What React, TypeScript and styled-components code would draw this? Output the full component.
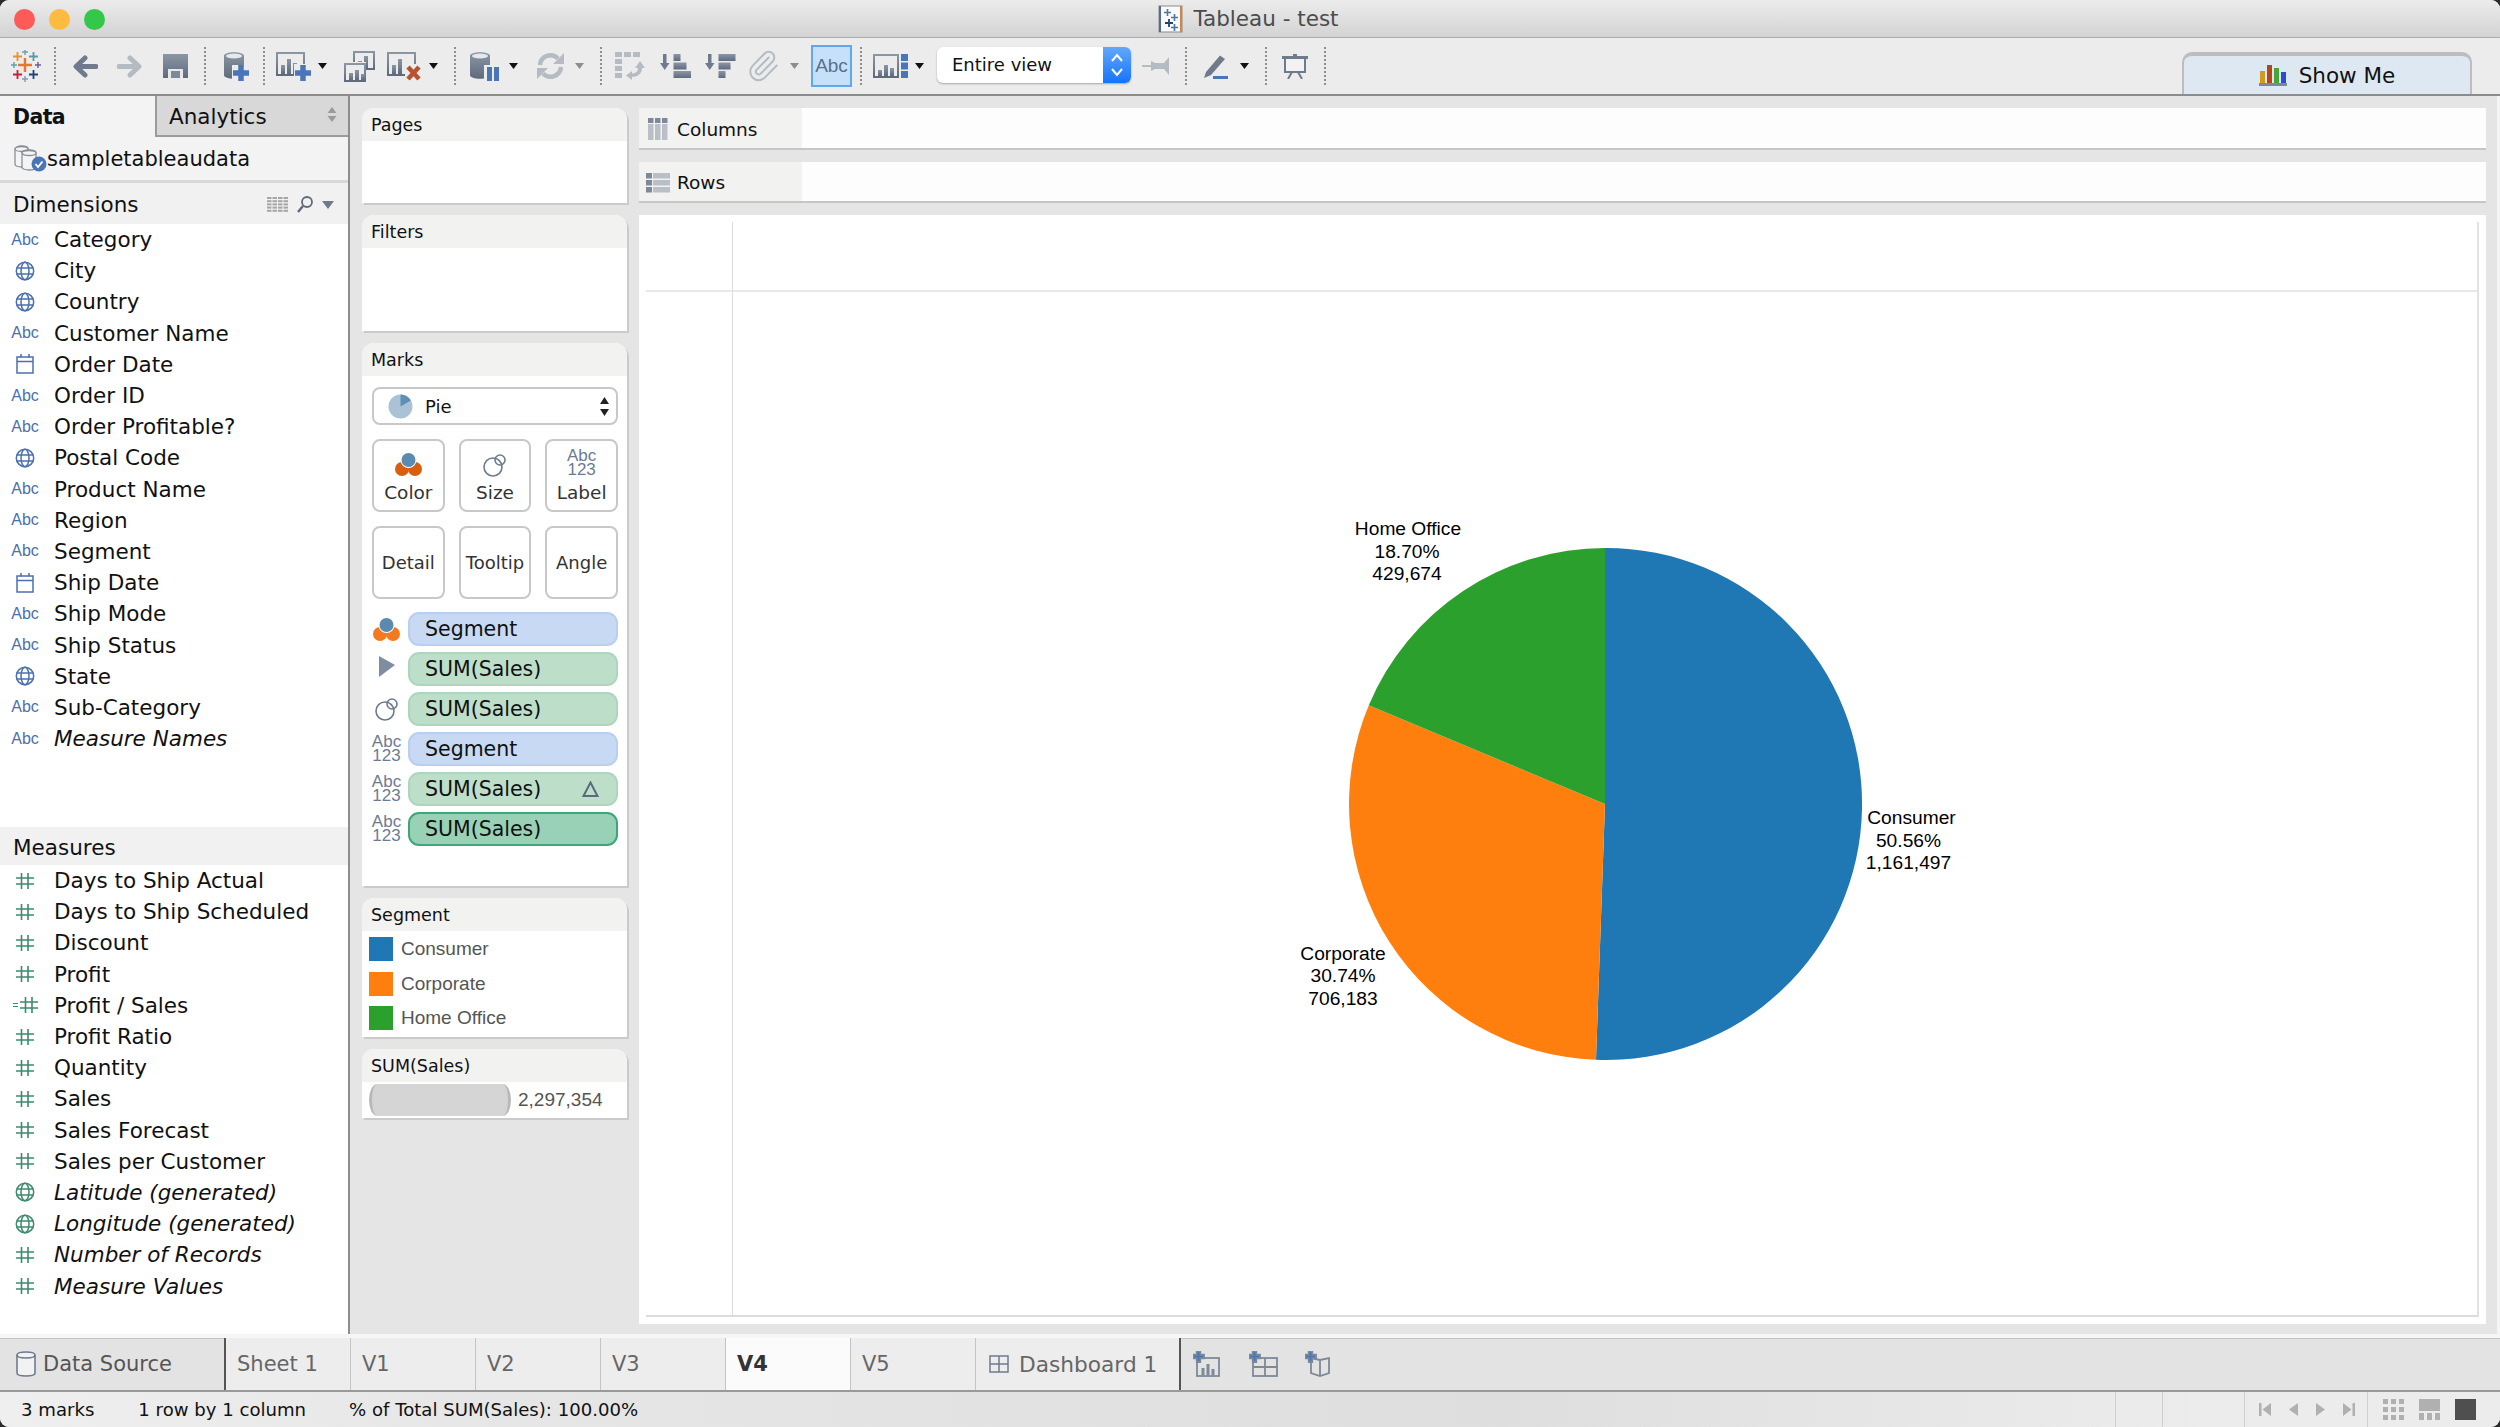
import React from "react";
import styled, { createGlobalStyle } from "styled-components";
import { Paperclip } from "lucide-react";

const UI_FONT = `"DejaVu Sans", Verdana, sans-serif`;
const ARIAL = `"Liberation Sans", Arial, sans-serif`;
const STEEL = "url(#steel)";
const BLUE = "#4a76b8";
const LIGHT = "#b4bbc3";

const GlobalStyle = createGlobalStyle`
  html, body {
    margin: 0;
    padding: 0;
    background: #2b2b2b;
    overflow: hidden;
  }
  * { box-sizing: border-box; }
`;

const dimensions = [
  ["abc", "Category"],
  ["globe", "City"],
  ["globe", "Country"],
  ["abc", "Customer Name"],
  ["date", "Order Date"],
  ["abc", "Order ID"],
  ["abc", "Order Profitable?"],
  ["globe", "Postal Code"],
  ["abc", "Product Name"],
  ["abc", "Region"],
  ["abc", "Segment"],
  ["date", "Ship Date"],
  ["abc", "Ship Mode"],
  ["abc", "Ship Status"],
  ["globe", "State"],
  ["abc", "Sub-Category"],
  ["abc", "Measure Names", true],
] as const;

const measures = [
  ["hash", "Days to Ship Actual"],
  ["hash", "Days to Ship Scheduled"],
  ["hash", "Discount"],
  ["hash", "Profit"],
  ["calc", "Profit / Sales"],
  ["hash", "Profit Ratio"],
  ["hash", "Quantity"],
  ["hash", "Sales"],
  ["hash", "Sales Forecast"],
  ["hash", "Sales per Customer"],
  ["gglobe", "Latitude (generated)", true],
  ["gglobe", "Longitude (generated)", true],
  ["hash", "Number of Records", true],
  ["hash", "Measure Values", true],
] as const;

const sheets = [
  { name: "Sheet 1" },
  { name: "V1" },
  { name: "V2" },
  { name: "V3" },
  { name: "V4", active: true },
  { name: "V5" },
];

function Plus({ x, y, s = 16, t = 5.5, fill = BLUE }: { x: number; y: number; s?: number; t?: number; fill?: string }) {
  const o = (s - t) / 2;
  return <path fill={fill} d={`M${x + o} ${y}h${t}v${o}h${o}v${t}h${-o}v${o}h${-t}v${-o}h${-o}v${-t}h${o}z`} />;
}

function Frame({ x, y, w, h, bars }: { x: number; y: number; w: number; h: number; bars: number[] }) {
  return (
    <>
      <rect x={x + 1} y={y + 1} width={w - 2} height={h - 2} fill="none" stroke={STEEL} strokeWidth="2" />
      {bars.map((b, i) => (
        <rect key={i} x={x + 5 + i * 6} y={y + h - 2 - b} width="4" height={b} fill={STEEL} />
      ))}
    </>
  );
}

function Cylinder() {
  return (
    <>
      <path fill={STEEL} d="M0 5C0 0 20 0 20 5V24C20 29 0 29 0 24Z" />
      <ellipse cx="10" cy="5" rx="8" ry="2.6" fill="#e6e8ea" />
    </>
  );
}

const TableauLogo = () => (
  <svg width="30" height="32" viewBox="0 0 30 32">
    <Plus x={7} y={8} s={14} t={2.4} fill="#e8762c" />
    <Plus x={2} y={2} s={9} t={1.8} fill="#e8942c" />
    <Plus x={18} y={2} s={9} t={1.8} fill="#5b9aa8" />
    <Plus x={2} y={20} s={9} t={1.8} fill="#c72037" />
    <Plus x={18} y={20} s={9} t={1.8} fill="#1f447a" />
    <Plus x={11} y={-1} s={6} t={1.4} fill="#6aa3b0" />
    <Plus x={11} y={26} s={6} t={1.4} fill="#7f9bb5" />
    <Plus x={0} y={12} s={6} t={1.4} fill="#60a0a8" />
    <Plus x={24} y={12} s={6} t={1.4} fill="#6a5c92" />
  </svg>
);

const BackIcon = ({ color = "#6f7b8c", flip = false }: { color?: string; flip?: boolean }) => (
  <svg width="26" height="23" viewBox="0 0 26 23" style={flip ? { transform: "scaleX(-1)" } : undefined}>
    <path d="M24 11.5H5M13 3 4 11.5 13 20" fill="none" stroke={color} strokeWidth="5" strokeLinecap="round" strokeLinejoin="round" />
  </svg>
);

const SaveIcon = () => (
  <svg width="25" height="24" viewBox="0 0 25 24">
    <rect width="25" height="24" fill={STEEL} />
    <rect x="5" y="15" width="15" height="9" fill="#e8e8e8" />
    <rect x="8" y="17" width="9" height="7" fill="#7d8998" />
  </svg>
);

const AddDataIcon = () => (
  <svg width="25" height="30" viewBox="0 0 25 30">
    <Cylinder />
    <rect x="8" y="14" width="17" height="16" fill="#ececec" />
    <Plus x={9} y={14} />
  </svg>
);

const NewSheetIcon = () => (
  <svg width="35" height="29" viewBox="0 0 35 29">
    <Frame x={0} y={0} w={29} h={24} bars={[9, 15, 11]} />
    <rect x="18" y="12" width="17" height="17" fill="#ececec" />
    <Plus x={19} y={13} />
  </svg>
);

const DuplicateIcon = () => (
  <svg width="31" height="31" viewBox="0 0 31 31">
    <Frame x={9} y={0} w={22} h={19} bars={[7, 12]} />
    <rect x="0" y="11" width="22" height="20" fill="#ececec" />
    <Frame x={0} y={12} w={22} h={19} bars={[7, 10, 6]} />
  </svg>
);

const ClearIcon = () => (
  <svg width="34" height="29" viewBox="0 0 34 29">
    <Frame x={0} y={0} w={29} h={24} bars={[9, 15]} />
    <rect x="18" y="12" width="16" height="17" fill="#ececec" />
    <path d="M21 15 32 27M32 15 21 27" stroke="#b8532f" strokeWidth="4.5" />
  </svg>
);

const PauseDataIcon = () => (
  <svg width="29" height="30" viewBox="0 0 29 30">
    <Cylinder />
    <rect x="14" y="14" width="15" height="16" fill="#ececec" />
    <rect x="17" y="16" width="5" height="14" fill={BLUE} />
    <rect x="24" y="16" width="5" height="14" fill={BLUE} />
  </svg>
);

const RefreshIcon = () => (
  <svg width="27" height="28" viewBox="0 0 27 28">
    <path d="M3 13A10.5 10.5 0 0 1 21 6.5M24 15A10.5 10.5 0 0 1 6 21.5" fill="none" stroke={LIGHT} strokeWidth="4.5" />
    <path d="M27 1V12H16ZM0 27V16H11Z" fill={LIGHT} />
  </svg>
);

const SwapIcon = () => (
  <svg width="30" height="28" viewBox="0 0 30 28" fill={LIGHT}>
    {[0, 9, 18].map((x) => (
      <rect key={x} x={x} y="0" width="7" height="5" />
    ))}
    {[7, 14, 21].map((y) => (
      <rect key={y} x="0" y={y} width="7" height="5" />
    ))}
    <path d="M25 9 30 16H27C27 22 22 25 17 25V28L11 23.5 17 19V21.5C20 21.5 23 20 23 16H20Z" />
  </svg>
);

const SortIcon = ({ desc = false }: { desc?: boolean }) => {
  const widths = desc ? [17, 12, 7] : [7, 13, 18];
  return (
    <svg width="31" height="25" viewBox="0 0 31 25">
      <rect x="3" y="0" width="3.5" height="10" fill="#6f7b8c" />
      <path d="M0 9H9.5L4.7 16Z" fill="#6f7b8c" />
      {widths.map((w, i) => (
        <rect key={i} x="13.5" y={i * 8.5} width={w} height="7" fill={STEEL} />
      ))}
    </svg>
  );
};

const PlacementIcon = () => (
  <svg width="35" height="25" viewBox="0 0 35 25">
    <Frame x={0} y={0} w={26} h={24} bars={[6, 11, 8]} />
    <rect x="28" y="0" width="7" height="7" fill={BLUE} />
    <rect x="28" y="8.5" width="7" height="7" fill={BLUE} />
    <rect x="28" y="17" width="7" height="7" fill={BLUE} />
  </svg>
);

const PinIcon = () => (
  <svg width="28" height="18" viewBox="0 0 28 18" fill={LIGHT}>
    <rect x="0" y="8" width="10" height="2" />
    <path d="M9 4 13 6H22L27 0V18L22 12H13L9 14Z" />
  </svg>
);

const PenIcon = () => (
  <svg width="26" height="25" viewBox="0 0 26 25">
    <path d="M3 18 17 1.5 22 5 8 21 1 24Z" fill="#6f7b8c" />
    <rect x="10" y="22" width="15" height="3" fill={BLUE} />
  </svg>
);

const PresentIcon = () => (
  <svg width="26" height="25" viewBox="0 0 26 25">
    <rect x="0" y="2" width="26" height="3" fill="#6f7b8c" />
    <rect x="11" y="0" width="4" height="3" fill="#6f7b8c" />
    <rect x="3" y="4" width="20" height="14" fill="#f2f2f2" stroke="#6f7b8c" strokeWidth="2" />
    <path d="M10 18 6 25M16 18 20 25" stroke="#6f7b8c" strokeWidth="2" />
  </svg>
);

const Caret = ({ light = false }: { light?: boolean }) => (
  <svg width="9" height="6" viewBox="0 0 9 6">
    <path d="M0 0H9L4.5 6Z" fill={light ? "#8d8d8d" : "#111"} />
  </svg>
);

const ShowMeIcon = () => (
  <svg width="28" height="21" viewBox="0 0 28 21">
    <rect x="1" y="6" width="5" height="12" fill="#d39b1d" />
    <rect x="8" y="0" width="5" height="18" fill="#b3471b" />
    <rect x="15" y="3" width="5" height="15" fill="#49a53a" />
    <rect x="22" y="7" width="5" height="11" fill="#2b4cd3" />
    <rect x="0" y="18" width="28" height="3" fill="#7d8998" />
  </svg>
);

const DocIcon = () => (
  <svg width="25" height="28" viewBox="0 0 25 28">
    <rect x="1" y="1" width="23" height="26" fill="#fafafa" stroke="#8c8c8c" />
    <rect x="1" y="1" width="2" height="26" fill="#4f6d96" />
    <rect x="22" y="1" width="2" height="26" fill="#d8843c" />
    <Plus x={6} y={4} s={7} t={1.6} fill="#4a76a8" />
    <Plus x={13} y={9} s={7} t={1.6} fill="#4a76a8" />
    <Plus x={7} y={14} s={8} t={1.8} fill="#24426f" />
    <Plus x={13} y={19} s={7} t={1.6} fill="#4a76a8" />
  </svg>
);

const GlobeIcon = ({ color }: { color: string }) => (
  <svg width="20" height="20" viewBox="0 0 20 20" fill="none" stroke={color} strokeWidth="1.5">
    <circle cx="10" cy="10" r="8.7" />
    <ellipse cx="10" cy="10" rx="4" ry="8.7" />
    <path d="M1.5 7H18.5M1.5 13H18.5" />
  </svg>
);

const DateIcon = () => (
  <svg width="18" height="20" viewBox="0 0 18 20" fill="none" stroke="#4a70b0" strokeWidth="1.5">
    <rect x="1" y="3" width="16" height="16" />
    <path d="M1 7.5H17M5 0V3.5M13 0V3.5" />
  </svg>
);

const HashIcon = ({ calc = false }: { calc?: boolean }) => (
  <svg width={calc ? 25 : 18} height="16" viewBox={calc ? "-7 0 25 16" : "0 0 18 16"} stroke="#3d8a6c" strokeWidth="1.6" fill="none">
    <path d="M5.5 0V16M12 0V16M0 5H18M0 11H18" />
    {calc && <path d="M-7 6.5H-2M-7 9.5H-2" strokeWidth="1.2" />}
  </svg>
);

const FieldIcon = ({ kind }: { kind: string }) => {
  if (kind === "abc") return <AbcMark>Abc</AbcMark>;
  if (kind === "globe") return <GlobeIcon color="#4a70b0" />;
  if (kind === "gglobe") return <GlobeIcon color="#3d8a6c" />;
  if (kind === "date") return <DateIcon />;
  return <HashIcon calc={kind === "calc"} />;
};

const DataSourceIcon = () => (
  <svg width="33" height="27" viewBox="0 0 33 27" fill="#f4f4f4" stroke="#8a8f96" strokeWidth="1.3">
    <path d="M1 4C1 0 14 0 14 4V19C14 23 1 23 1 19Z" />
    <ellipse cx="7.5" cy="4" rx="6.5" ry="2.5" />
    <path d="M8 8C8 4 22 4 22 8V22C22 26 8 26 8 22Z" />
    <ellipse cx="15" cy="8" rx="7" ry="2.5" />
    <circle cx="25" cy="19" r="7.5" fill="#4a76b8" stroke="none" />
    <path d="M21.5 19 24 22 28.5 16.5" stroke="#fff" strokeWidth="1.8" fill="none" />
  </svg>
);

const ListIcon = () => (
  <svg width="21" height="16" viewBox="0 0 21 16" fill="#a6a6a6">
    {[0, 3.2, 6.4, 9.6, 12.8].map((y) =>
      [0, 5.5, 11, 16.5].map((x) => <rect key={`${x}-${y}`} x={x} y={y} width="4.5" height="2" />)
    )}
  </svg>
);

const SearchIcon = () => (
  <svg width="16" height="17" viewBox="0 0 16 17" fill="none" stroke="#5e6a7a" strokeWidth="1.8">
    <circle cx="10" cy="6" r="5" />
    <path d="M6 10 1 16" strokeWidth="2.4" />
  </svg>
);

const VennIcon = ({ dim = false }: { dim?: boolean }) => (
  <svg width="27" height="25" viewBox="0 0 27 25">
    <circle cx="7" cy="17" r="7" fill={dim ? "#d95f0e" : "#f47a20"} />
    <circle cx="20" cy="17" r="7" fill={dim ? "#d95f0e" : "#f47a20"} />
    <circle cx="13.5" cy="8" r="8" fill="#fff" />
    <circle cx="13.5" cy="8" r="7" fill="#5a8ab0" />
  </svg>
);

const SizeIcon = () => (
  <svg width="24" height="24" viewBox="0 0 24 24" fill="none" stroke="#6b7b90" strokeWidth="1.6">
    <circle cx="10" cy="14" r="9" />
    <circle cx="17" cy="7" r="5" />
  </svg>
);

const AngleIcon = () => (
  <svg width="18" height="22" viewBox="0 0 18 22" style={{ marginBottom: 4 }}>
    <path d="M1 0 17 9 1 21Z" fill="#7f8da0" />
  </svg>
);

const PieTypeIcon = () => (
  <svg width="25" height="25" viewBox="-12.5 -12.5 25 25">
    <circle r="12" fill="#a9c2d6" />
    <path d="M0 0V-12A12 12 0 0 1 10.4 -6Z" fill="#5f8fb3" />
  </svg>
);

const ColumnsIcon = () => (
  <svg width="20" height="22" viewBox="0 0 20 22">
    {[0, 7, 14].map((x) => (
      <React.Fragment key={x}>
        <rect x={x} y="0" width="5.5" height="5" fill="#7d8998" />
        <rect x={x} y="6" width="5.5" height="16" fill="#b9bfc7" />
      </React.Fragment>
    ))}
  </svg>
);

const RowsIcon = () => (
  <svg width="24" height="20" viewBox="0 0 24 20">
    {[0, 7, 14].map((y) => (
      <React.Fragment key={y}>
        <rect x="0" y={y} width="6" height="5.5" fill="#7d8998" />
        <rect x="7" y={y} width="17" height="5.5" fill="#b9bfc7" />
      </React.Fragment>
    ))}
  </svg>
);

const TabPlus = ({ kind }: { kind: "sheet" | "dash" | "story" }) => (
  <svg width="29" height="26" viewBox="0 0 29 26" fill="none" stroke="#7d8998" strokeWidth="1.8">
    {kind === "sheet" && (
      <>
        <rect x="4" y="7" width="22" height="18" />
        <path d="M10 24V17M15 24V13M20 24V18" strokeWidth="3" />
      </>
    )}
    {kind === "dash" && (
      <>
        <rect x="4" y="7" width="24" height="18" />
        <path d="M16 7V25M4 16H28" />
      </>
    )}
    {kind === "story" && <path d="M6 7 15 9 24 7V22L15 25 6 22ZM15 9V25" />}
    <Plus x={0} y={0} s={11} t={3.5} fill={BLUE} />
  </svg>
);

function PieChart() {
  const r = 256;
  const point = (pct: number) => {
    const a = (pct / 100) * Math.PI * 2;
    return `${(Math.sin(a) * r).toFixed(1)} ${(-Math.cos(a) * r).toFixed(1)}`;
  };
  return (
    <svg width="1000" height="600" viewBox="-500 -300 1000 600">
      <path d={`M0 0L0 ${-r}A${r} ${r} 0 1 1 ${point(50.56)}Z`} fill="#1f77b4" />
      <path d={`M0 0L${point(50.56)}A${r} ${r} 0 0 1 ${point(81.3)}Z`} fill="#ff7f0e" />
      <path d={`M0 0L${point(81.3)}A${r} ${r} 0 0 1 0 ${-r}Z`} fill="#2ca02c" />
      <g fontFamily={ARIAL} fontSize="19.2" fill="#000" textAnchor="middle">
        <text x="-197" y="-269">Home Office</text>
        <text x="-198" y="-246.5">18.70%</text>
        <text x="-198" y="-224">429,674</text>
        <text x="306.5" y="20">Consumer</text>
        <text x="303.5" y="42.5">50.56%</text>
        <text x="303.5" y="65">1,161,497</text>
        <text x="-262" y="155.5">Corporate</text>
        <text x="-262" y="178">30.74%</text>
        <text x="-262" y="200.5">706,183</text>
      </g>
    </svg>
  );
}

export default function App() {
  return (
    <Windowed>
      <GlobalStyle />
      <svg width="0" height="0" style={{ display: "block" }}>
        <defs>
          <linearGradient id="steel" x1="0" y1="0" x2="0" y2="1">
            <stop offset="0" stopColor="#8b96a5" />
            <stop offset="1" stopColor="#5f6b7d" />
          </linearGradient>
        </defs>
      </svg>

      <TitleBar>
        <Lights>
          <Light $color="#fc5b57" />
          <Light $color="#fdbc40" />
          <Light $color="#34c84a" />
        </Lights>
        <DocIcon />
        <TitleText>Tableau - test</TitleText>
      </TitleBar>

      <Toolbar>
        <Tool $gap={11}><TableauLogo /></Tool>
        <Sep $gap={13} />
        <Tool $gap={16}><BackIcon /></Tool>
        <Tool $gap={19}><BackIcon flip color={LIGHT} /></Tool>
        <Tool $gap={20}><SaveIcon /></Tool>
        <Sep $gap={16} />
        <Tool $gap={18}><AddDataIcon /></Tool>
        <Sep $gap={14} />
        <Tool $gap={11}><NewSheetIcon /></Tool>
        <Tool $gap={7}><Caret /></Tool>
        <Tool $gap={17}><DuplicateIcon /></Tool>
        <Tool $gap={12}><ClearIcon /></Tool>
        <Tool $gap={8}><Caret /></Tool>
        <Sep $gap={16} />
        <Tool $gap={14}><PauseDataIcon /></Tool>
        <Tool $gap={10}><Caret /></Tool>
        <Tool $gap={19}><RefreshIcon /></Tool>
        <Tool $gap={11}><Caret light /></Tool>
        <Sep $gap={16} />
        <Tool $gap={13}><SwapIcon /></Tool>
        <Tool $gap={15}><SortIcon /></Tool>
        <Tool $gap={14}><SortIcon desc /></Tool>
        <Tool $gap={10}><Paperclip size={34} color={LIGHT} strokeWidth={1.4} /></Tool>
        <Tool $gap={10}><Caret light /></Tool>
        <AbcToggle>Abc</AbcToggle>
        <Sep $gap={8} />
        <Tool $gap={11}><PlacementIcon /></Tool>
        <Tool $gap={7}><Caret /></Tool>
        <FitSelect>
          <FitLabel>Entire view</FitLabel>
          <FitStepper>
            <svg width="14" height="26" viewBox="0 0 14 26" fill="none" stroke="#fff" strokeWidth="2">
              <path d="M2 9 7 3 12 9M2 17 7 23 12 17" />
            </svg>
          </FitStepper>
        </FitSelect>
        <Tool $gap={11}><PinIcon /></Tool>
        <Sep $gap={15} />
        <Tool $gap={16}><PenIcon /></Tool>
        <Tool $gap={11}><Caret /></Tool>
        <Sep $gap={16} />
        <Tool $gap={15}><PresentIcon /></Tool>
        <Sep $gap={16} />
        <ShowMe>
          <ShowMeIcon />
          Show Me
        </ShowMe>
      </Toolbar>

      <Body>
        <Sidebar>
          <SideTabs>
            <DataTab>Data</DataTab>
            <AnalyticsTab>
              Analytics
              <svg width="10" height="15" viewBox="0 0 10 15" fill="#9a9a9a">
                <path d="M5 0 9.5 6H.5ZM5 15 9.5 9H.5Z" />
              </svg>
            </AnalyticsTab>
          </SideTabs>
          <SourceRow>
            <DataSourceIcon />
            <span>sampletableaudata</span>
          </SourceRow>
          <SideHeader>
            Dimensions
            <HeaderTools>
              <ListIcon />
              <SearchIcon />
              <svg width="12" height="8" viewBox="0 0 12 8"><path d="M0 0H12L6 8Z" fill="#6f7b8c" /></svg>
            </HeaderTools>
          </SideHeader>
          <FieldList $h={603}>
            {dimensions.map(([kind, name, italic]) => (
              <FieldRow key={name}>
                <FieldSlot><FieldIcon kind={kind} /></FieldSlot>
                <FieldName $italic={!!italic}>{name}</FieldName>
              </FieldRow>
            ))}
          </FieldList>
          <SideHeader $thin>Measures</SideHeader>
          <FieldList>
            {measures.map(([kind, name, italic]) => (
              <FieldRow key={name}>
                <FieldSlot><FieldIcon kind={kind} /></FieldSlot>
                <FieldName $italic={!!italic}>{name}</FieldName>
              </FieldRow>
            ))}
          </FieldList>
        </Sidebar>

        <CardColumn>
          <Card $h={95}><CardHeader>Pages</CardHeader></Card>
          <Card $h={116}><CardHeader>Filters</CardHeader></Card>
          <Card $h={543}>
            <CardHeader>Marks</CardHeader>
            <MarksBody>
              <MarkSelect>
                <PieTypeIcon />
                <MarkSelectLabel>Pie</MarkSelectLabel>
                <svg width="9" height="19" viewBox="0 0 9 19" fill="#222">
                  <path d="M4.5 0 9 7H0ZM4.5 19 9 12H0Z" />
                </svg>
              </MarkSelect>
              <MarkGrid>
                <MarkButton><VennIcon dim /><span>Color</span></MarkButton>
                <MarkButton><SizeIcon /><span>Size</span></MarkButton>
                <MarkButton><AbcStack $size={17}>Abc<br />123</AbcStack><span>Label</span></MarkButton>
                <MarkButton $plain><span>Detail</span></MarkButton>
                <MarkButton $plain><span>Tooltip</span></MarkButton>
                <MarkButton $plain><span>Angle</span></MarkButton>
              </MarkGrid>
              <PillList>
                <PillRow><PillIcon><VennIcon /></PillIcon><Pill $kind="dim">Segment</Pill></PillRow>
                <PillRow><PillIcon><AngleIcon /></PillIcon><Pill $kind="mea">SUM(Sales)</Pill></PillRow>
                <PillRow><PillIcon><SizeIcon /></PillIcon><Pill $kind="mea">SUM(Sales)</Pill></PillRow>
                <PillRow><PillIcon><AbcStack $size={17}>Abc<br />123</AbcStack></PillIcon><Pill $kind="dim">Segment</Pill></PillRow>
                <PillRow>
                  <PillIcon><AbcStack $size={17}>Abc<br />123</AbcStack></PillIcon>
                  <Pill $kind="mea">
                    SUM(Sales)
                    <svg width="17" height="16" viewBox="0 0 17 16">
                      <path d="M8.5 1.5 15.5 15H1.5Z" fill="none" stroke="#5b6a7d" strokeWidth="2" />
                    </svg>
                  </Pill>
                </PillRow>
                <PillRow><PillIcon><AbcStack $size={17}>Abc<br />123</AbcStack></PillIcon><Pill $kind="sel">SUM(Sales)</Pill></PillRow>
              </PillList>
            </MarksBody>
          </Card>
          <Card $h={139}>
            <CardHeader>Segment</CardHeader>
            <Legend>
              <LegendRow><Swatch $color="#1f77b4" />Consumer</LegendRow>
              <LegendRow><Swatch $color="#ff7f0e" />Corporate</LegendRow>
              <LegendRow><Swatch $color="#2ca02c" />Home Office</LegendRow>
            </Legend>
          </Card>
          <Card $h={69}>
            <CardHeader>SUM(Sales)</CardHeader>
            <SizeLegend>
              <SizeBar />
              2,297,354
            </SizeLegend>
          </Card>
        </CardColumn>

        <ViewColumn>
          <Shelf $h={42}>
            <ShelfLabel><ShelfIcon><ColumnsIcon /></ShelfIcon>Columns</ShelfLabel>
          </Shelf>
          <Shelf $h={41}>
            <ShelfLabel><ShelfIcon><RowsIcon /></ShelfIcon>Rows</ShelfLabel>
          </Shelf>
          <Canvas>
            <CanvasGrid>
              <CornerCell />
              <TopCell />
              <SideCell />
              <PaneCell><PieChart /></PaneCell>
            </CanvasGrid>
          </Canvas>
        </ViewColumn>
      </Body>

      <TabBar>
        <SourceTab>
          <svg width="20" height="26" viewBox="0 0 20 26" fill="#f2f2f2" stroke="#6f7b8c" strokeWidth="1.6">
            <path d="M1 4C1 0 19 0 19 4V22C19 26 1 26 1 22Z" />
            <path d="M1 4C1 8 19 8 19 4" fill="none" />
          </svg>
          Data Source
        </SourceTab>
        {sheets.map((s) => (
          <SheetTab key={s.name} $active={!!s.active}>{s.name}</SheetTab>
        ))}
        <DashTab>
          <svg width="20" height="18" viewBox="0 0 20 18" fill="none" stroke="#6f7b8c" strokeWidth="1.5">
            <rect x="1" y="1" width="18" height="16" />
            <path d="M10 1V17M1 9H19" />
          </svg>
          Dashboard 1
        </DashTab>
        <NewTabs>
          <TabPlus kind="sheet" />
          <TabPlus kind="dash" />
          <TabPlus kind="story" />
        </NewTabs>
      </TabBar>

      <StatusBar>
        <StatusText $gap={21}>3 marks</StatusText>
        <StatusText $gap={44}>1 row by 1 column</StatusText>
        <StatusText $gap={43}>% of Total SUM(Sales): 100.00%</StatusText>
        <StatusCell $w={47} $auto />
        <StatusCell $w={82} />
        <StatusCell $w={123}>
          <NavRow>
            <svg width="12" height="13" viewBox="0 0 12 13"><path d="M0 0H2.5V13H0ZM12 0V13L3.5 6.5Z" /></svg>
            <svg width="9" height="13" viewBox="0 0 9 13"><path d="M9 0V13L0 6.5Z" /></svg>
            <svg width="9" height="13" viewBox="0 0 9 13"><path d="M0 0V13L9 6.5Z" /></svg>
            <svg width="12" height="13" viewBox="0 0 12 13"><path d="M12 0H9.5V13H12ZM0 0V13L8.5 6.5Z" /></svg>
          </NavRow>
        </StatusCell>
        <StatusCell $w={133}>
          <ViewRow>
            <svg width="21" height="21" viewBox="0 0 21 21" fill="#b0b0b0">
              {[0, 8, 16].map((y) =>
                [0, 8, 16].map((x) => <rect key={`${x}-${y}`} x={x} y={y} width="5" height="5" />)
              )}
            </svg>
            <svg width="21" height="21" viewBox="0 0 21 21" fill="#b0b0b0">
              <rect width="21" height="12" />
              {[0, 8, 16].map((x) => <rect key={x} x={x} y="14" width="5" height="7" />)}
            </svg>
            <svg width="21" height="21" viewBox="0 0 21 21"><rect width="21" height="21" fill="#4f4f4f" /></svg>
          </ViewRow>
        </StatusCell>
      </StatusBar>
    </Windowed>
  );
}

const Windowed = styled.div`
  width: 2500px;
  height: 1427px;
  display: flex;
  flex-direction: column;
  overflow: hidden;
  border-radius: 9px;
  background: #e5e5e5;
  font-family: ${UI_FONT};
  color: #111;
`;

const TitleBar = styled.div`
  position: relative;
  flex: 0 0 38px;
  display: flex;
  align-items: center;
  justify-content: center;
  gap: 10px;
  padding-right: 3px;
  background: linear-gradient(#ececec, #d3d3d3);
  border-bottom: 1px solid #adadad;
`;

const Lights = styled.div`
  position: absolute;
  left: 14px;
  top: 9px;
  display: flex;
  gap: 14px;
`;

const Light = styled.span<{ $color: string }>`
  width: 21px;
  height: 21px;
  border-radius: 50%;
  background: ${(p) => p.$color};
`;

const TitleText = styled.span`
  font-size: 21.5px;
  color: #4c4c4c;
`;

const Toolbar = styled.div`
  flex: 0 0 58px;
  display: flex;
  align-items: center;
  background: #ececec;
  border-bottom: 2px solid #8c8c8c;
`;

const Tool = styled.span<{ $gap: number }>`
  display: flex;
  align-items: center;
  justify-content: center;
  margin-left: ${(p) => p.$gap}px;
`;

const Sep = styled.span<{ $gap: number }>`
  height: 38px;
  margin-left: ${(p) => p.$gap}px;
  border-left: 2px dotted #8f8f8f;
`;

const AbcToggle = styled.span`
  width: 41px;
  height: 42px;
  margin-left: 12px;
  display: flex;
  align-items: center;
  justify-content: center;
  background: #c7e0f9;
  border: 2px solid #5fa8f0;
  font: 19px ${ARIAL};
  color: #59708e;
`;

const FitSelect = styled.div`
  width: 194px;
  height: 36px;
  margin: 0 0 3px 13px;
  display: flex;
  background: #fff;
  border-radius: 6px;
  box-shadow: 0 1px 2px #0000004d;
  overflow: hidden;
`;

const FitLabel = styled.span`
  flex: 1;
  padding-left: 15px;
  font-size: 18px;
  line-height: 35px;
`;

const FitStepper = styled.span`
  width: 28px;
  display: flex;
  align-items: center;
  justify-content: center;
  background: linear-gradient(#62a8fb, #1474fc);
`;

const ShowMe = styled.div`
  width: 290px;
  height: 42px;
  margin-left: auto;
  margin-right: 28px;
  align-self: flex-end;
  display: flex;
  align-items: center;
  justify-content: center;
  gap: 12px;
  font-size: 21.5px;
  background: #dde8f2;
  border: 2px solid #bdbdbd;
  border-bottom: none;
  border-top-width: 4px;
  border-radius: 10px 10px 0 0;
`;

const Body = styled.div`
  flex: 0 0 1238px;
  display: flex;
  background: #e5e5e5;
  border-right: 3px solid #f4f4f4;
`;

const Sidebar = styled.div`
  width: 350px;
  display: flex;
  flex-direction: column;
  background: #fff;
  border-right: 2px solid #8e8e8e;
`;

const SideTabs = styled.div`
  height: 41px;
  display: flex;
`;

const DataTab = styled.div`
  width: 155px;
  padding: 9px 0 0 13px;
  font-size: 20.5px;
  font-weight: 700;
  letter-spacing: -0.6px;
  background: #f3f3f3;
`;

const AnalyticsTab = styled.div`
  flex: 1;
  display: flex;
  justify-content: space-between;
  padding: 8px 11px 0 12px;
  font-size: 21.5px;
  background: #d8d8d8;
  border-left: 2px solid #9b9b9b;
  border-bottom: 2px solid #9b9b9b;

  svg {
    margin-top: 3px;
  }
`;

const SourceRow = styled.div`
  height: 46px;
  display: flex;
  align-items: center;
  padding-left: 14px;
  font-size: 21px;
  background: #f3f3f3;
  border-bottom: 3px solid #d8d8d8;
`;

const SideHeader = styled.div<{ $thin?: boolean }>`
  height: ${(p) => (p.$thin ? 38 : 41)}px;
  display: flex;
  align-items: center;
  justify-content: space-between;
  padding: 2px 14px 0 13px;
  font-size: 21.5px;
  background: #f1f1f1;
`;

const HeaderTools = styled.span`
  display: flex;
  align-items: center;
  gap: 9px;
  margin-left: auto;
`;

const FieldList = styled.div<{ $h?: number }>`
  height: ${(p) => (p.$h ? `${p.$h}px` : "auto")};
  background: #fff;
`;

const FieldRow = styled.div`
  height: 31.2px;
  display: flex;
  align-items: center;
`;

const FieldSlot = styled.span`
  width: 49px;
  margin-right: 5px;
  display: flex;
  justify-content: center;
  padding-left: 1px;
`;

const FieldName = styled.span<{ $italic: boolean }>`
  font-size: 21.5px;
  font-style: ${(p) => (p.$italic ? "italic" : "normal")};
`;

const AbcMark = styled.span`
  font: 16px ${ARIAL};
  color: #4a70b0;
`;

const AbcStack = styled.span<{ $size: number }>`
  font: ${(p) => p.$size}px/${(p) => p.$size - 3}px ${ARIAL};
  text-align: center;
  color: #6d7b91;
`;

const CardColumn = styled.div`
  width: 265px;
  margin: 12px 12px 0;
  display: flex;
  flex-direction: column;
  gap: 12px;
`;

const Card = styled.div<{ $h: number }>`
  height: ${(p) => p.$h}px;
  background: #fff;
  border-radius: 12px 12px 0 0;
  box-shadow: 2px 2px 0 #cbcbcb;
`;

const CardHeader = styled.div`
  height: 33px;
  padding-left: 9px;
  font-size: 17.5px;
  line-height: 35px;
  background: #f2f2f1;
  border-radius: 12px 12px 0 0;
`;

const MarksBody = styled.div`
  padding: 11px 9px 0 10px;
`;

const MarkSelect = styled.div`
  height: 38px;
  display: flex;
  align-items: center;
  padding: 0 7px 0 14px;
  border: 2px solid #c8c8c8;
  border-radius: 8px;
`;

const MarkSelectLabel = styled.span`
  flex: 1;
  margin-left: 12px;
  font-size: 18px;
`;

const MarkGrid = styled.div`
  margin-top: 14px;
  display: grid;
  grid-template-columns: repeat(3, 1fr);
  grid-auto-rows: 73px;
  gap: 14px;
`;

const MarkButton = styled.div<{ $plain?: boolean }>`
  display: flex;
  flex-direction: column;
  align-items: center;
  justify-content: ${(p) => (p.$plain ? "center" : "flex-end")};
  gap: 5px;
  padding-bottom: ${(p) => (p.$plain ? 0 : 7)}px;
  border: 2px solid #c8c8c8;
  border-radius: 8px;
  font-size: ${(p) => (p.$plain ? 18 : 18.5)}px;
  color: #333;
  white-space: nowrap;
`;

const PillList = styled.div`
  margin-top: 13px;
  display: flex;
  flex-direction: column;
  gap: 6px;
`;

const PillRow = styled.div`
  height: 34px;
  display: flex;
  align-items: center;
`;

const PillIcon = styled.span`
  width: 29px;
  margin-right: 7px;
  display: flex;
  justify-content: center;
`;

const pillColors = {
  dim: ["#c7d9f3", "#b9cef0"],
  mea: ["#bddfca", "#aed6be"],
  sel: ["#98d1b5", "#3fa67c"],
};

const Pill = styled.div<{ $kind: "dim" | "mea" | "sel" }>`
  flex: 1;
  height: 34px;
  display: flex;
  align-items: center;
  justify-content: space-between;
  padding: 0 17px 0 15px;
  font-size: 20.5px;
  background: ${(p) => pillColors[p.$kind][0]};
  border: 2px solid ${(p) => pillColors[p.$kind][1]};
  border-radius: 11px;
`;

const Legend = styled.div`
  padding: 1px 0 0 7px;
`;

const LegendRow = styled.div`
  height: 34.5px;
  display: flex;
  align-items: center;
  gap: 8px;
  font: 19px ${ARIAL};
  color: #555;
`;

const Swatch = styled.span<{ $color: string }>`
  width: 24px;
  height: 24px;
  background: ${(p) => p.$color};
`;

const SizeLegend = styled.div`
  display: flex;
  align-items: center;
  gap: 7px;
  padding: 2px 0 0 7px;
  font: 19px ${ARIAL};
  color: #555;
`;

const SizeBar = styled.span`
  width: 142px;
  height: 32px;
  background: #d5d5d5;
  border-left: 3px solid #b8b8b8;
  border-right: 3px solid #b8b8b8;
  border-radius: 8px / 50%;
`;

const ViewColumn = styled.div`
  flex: 1;
  margin: 12px 11px 10px 0;
  display: flex;
  flex-direction: column;
  gap: 12px;
`;

const Shelf = styled.div<{ $h: number }>`
  flex: 0 0 ${(p) => p.$h}px;
  display: flex;
  background: #fdfdfd;
  border-bottom: 2px solid #c6c6c6;
`;

const ShelfLabel = styled.div`
  width: 163px;
  display: flex;
  align-items: center;
  gap: 7px;
  padding: 2px 0 0 7px;
  font-size: 18.5px;
  background: #f2f2f1;
`;

const ShelfIcon = styled.span`
  width: 24px;
  display: flex;
  justify-content: center;
`;

const Canvas = styled.div`
  flex: 1;
  padding: 7px;
  background: #fff;
`;

const CanvasGrid = styled.div`
  height: 100%;
  display: grid;
  grid-template-columns: 87px 1fr;
  grid-template-rows: 70px 1fr;
  border-right: 2px solid #e2e2e2;
  border-bottom: 2px solid #dcdcdc;
`;

const CornerCell = styled.div`
  border-right: 1px solid #dcdcdc;
  border-bottom: 2px solid #e8e8e8;
`;

const TopCell = styled.div`
  border-bottom: 2px solid #e8e8e8;
`;

const SideCell = styled.div`
  border-right: 1px solid #dcdcdc;
`;

const PaneCell = styled.div`
  display: flex;
  align-items: center;
  justify-content: center;
  min-width: 0;
`;

const TabBar = styled.div`
  flex: 0 0 58px;
  display: flex;
  background: #e3e3e3;
  border-top: 4px solid #f6f6f6;
  box-shadow: inset 0 1px 0 #c4c4c4;
  border-bottom: 2px solid #9a9a9a;
`;

const SourceTab = styled.div`
  width: 226px;
  display: flex;
  align-items: center;
  gap: 7px;
  padding-left: 16px;
  font-size: 21px;
  color: #555;
  border-right: 2px solid #555;
`;

const SheetTab = styled.div<{ $active: boolean }>`
  width: 125px;
  display: flex;
  align-items: center;
  padding-left: 11px;
  font-size: 21px;
  font-weight: ${(p) => (p.$active ? 700 : 400)};
  color: ${(p) => (p.$active ? "#333" : "#666")};
  background: ${(p) => (p.$active ? "#fbfbfb" : "#ededed")};
  border-right: 1px solid #c4c4c4;
`;

const DashTab = styled.div`
  width: 205px;
  display: flex;
  align-items: center;
  gap: 10px;
  padding-left: 13px;
  font-size: 21.7px;
  color: #666;
  background: #ededed;
  border-right: 2px solid #555;
`;

const NewTabs = styled.div`
  display: flex;
  align-items: center;
  gap: 27px;
  padding-left: 12px;
`;

const StatusBar = styled.div`
  flex: 1;
  display: flex;
  align-items: stretch;
  background: linear-gradient(90deg, #efefef, #e6e6e6 20%, #dedede 60%, #ececec 88%);
`;

const StatusText = styled.span<{ $gap: number }>`
  margin-left: ${(p) => p.$gap}px;
  font-size: 18.1px;
  line-height: 35px;
`;

const StatusCell = styled.div<{ $w: number; $auto?: boolean }>`
  width: ${(p) => p.$w}px;
  margin-left: ${(p) => (p.$auto ? "auto" : 0)};
  display: flex;
  align-items: center;
  border-left: 1px solid #cfcfcf;
`;

const NavRow = styled.div`
  display: flex;
  align-items: center;
  gap: 18px;
  padding-left: 14px;
  fill: #b0b0b0;
`;

const ViewRow = styled.div`
  display: flex;
  gap: 15px;
  padding-left: 15px;
`;
